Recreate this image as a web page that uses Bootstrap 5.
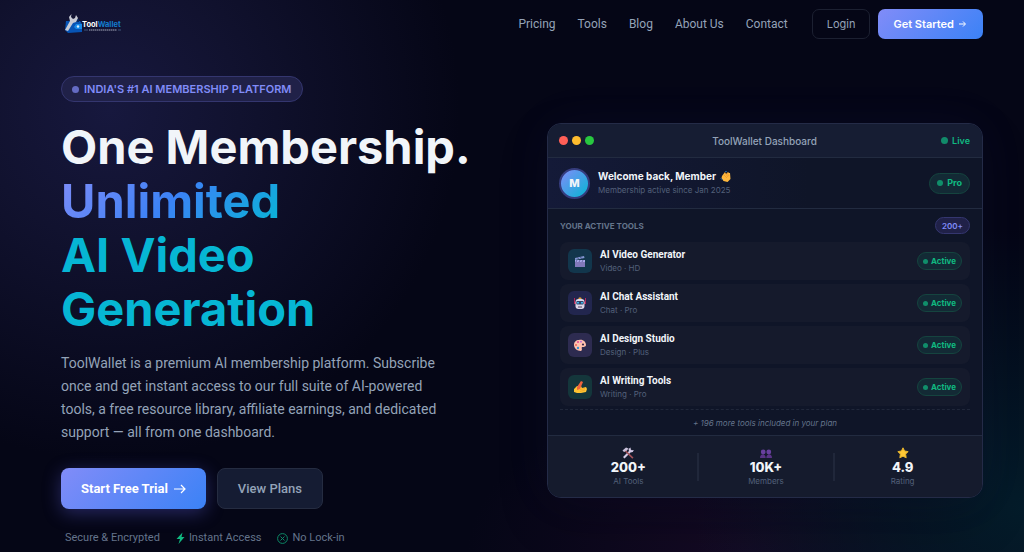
<!DOCTYPE html>
<html lang="en">
<head>
<meta charset="utf-8">
<meta name="viewport" content="width=device-width, initial-scale=1">
<title>ToolWallet</title>
<link href="https://cdn.jsdelivr.net/npm/bootstrap@5.3.0/dist/css/bootstrap.min.css" rel="stylesheet">
<style>
:root{--violet:#818cf8;--blue:#3b82f6;--cyan:#06b6d4;--green:#10b981;--muted:#94a3b8;--dim:#53607a;--line:#222b40}
body{font-family:Inter,"Open Sans",sans-serif;font-size:12px;line-height:16px;color:#f1f5f9;background:#050616;min-height:100vh;
 background-image:radial-gradient(circle at 110px 110px,#17183e 0,#11122f 130px,rgba(5,6,22,0) 350px),radial-gradient(ellipse 330px 280px at 100% 92%,#041c2a,rgba(4,28,42,0)),radial-gradient(ellipse 280px 160px at 73% 100%,#150a24,rgba(21,10,36,0))}
.page-pad{padding-left:61px;padding-right:41px}
.top-nav{height:48px;padding-top:0;padding-bottom:0}
.nav-links{gap:22px}
.top-nav .nav-links .nav-link{color:var(--muted);padding:0;font:400 12px/16px Roboto,Inter,sans-serif}
.grad{background:linear-gradient(135deg,var(--violet),var(--blue));color:#fff;border:0}
.btn-top{font-size:11px;line-height:16px;height:30px;border-radius:7px;padding:0 14px}
.btn-start{padding:0 15px}
.btn-ghost{color:var(--muted);border:1px solid #1c2031}
.hero-row{--bs-gutter-x:50px}
.hero{padding-top:28px}
.pill{display:inline-flex;align-items:center;border-radius:50px;border:1px solid;white-space:nowrap;font-weight:600}
.pill-violet{background:#202148;border-color:#34366f;color:var(--violet)}
.pill-green{background:#132a35;border-color:#15443f;color:var(--green);font-weight:700}
.hero-pill{font-size:11px;height:26px;padding:0 10px;gap:5px}
.dot{width:7px;height:7px;border-radius:50%;background:currentColor;opacity:.7;flex:none}
.dot-s{width:5px;height:5px}
.dot-m{width:6px;height:6px}
h1{font-size:47px;line-height:54px;font-weight:700;color:#f1f5f9;margin:18px 0 0}
.t-grad{background:linear-gradient(135deg,var(--violet),var(--blue) 50%,var(--cyan));-webkit-background-clip:text;background-clip:text;color:transparent}
.t-cyan{color:var(--cyan)}
.intro{font-family:Roboto,Inter,sans-serif;font-size:14px;line-height:23px;color:var(--muted);margin:16px 0 24px}
.actions{gap:11px}
.btn-hero{font-family:Roboto,Inter,sans-serif;font-size:13px;line-height:18px;height:41px;border-radius:8px;padding:0 20px}
.btn-main{font-weight:700;box-shadow:0 4px 18px rgba(99,102,241,.35)}
.btn-plans{background:#151c33;color:var(--muted);border:1px solid #252c41;font-weight:500}
.trust{font-family:Roboto,Inter,sans-serif;font-size:11px;line-height:14px;color:#64748b;margin-top:22px}
.dash{background:#0f1528;border:1px solid #242b47;border-radius:14px;box-shadow:0 20px 50px rgba(0,0,0,.2),0 0 50px rgba(99,102,241,.06)}
.dash-head{height:34px;background:#161d33;border-bottom:1px solid var(--line)}
.dash-head>div{flex:1 1 0}
.dash-title{font-size:10px;font-weight:500;color:var(--muted)}
.light{width:9px;height:9px;border-radius:50%}
.light-red{background:#ff5f57}.light-yellow{background:#febc2e}.light-green{background:#28c840}
.dash-user{height:51px;background:linear-gradient(90deg,#141a38,#0f1528 60%);border-bottom:1px solid var(--line)}
.avatar{width:31px;height:31px;border-radius:50%;background:linear-gradient(135deg,var(--violet),var(--cyan));border:2px solid #353c7d;font-size:11px;font-weight:800}
.pad-x{padding-left:12px;padding-right:12px}
.dash-head,.dash-user{padding-left:11px}
.name{font-size:10px;line-height:15px;font-weight:700}
.tool .name{font-family:Roboto,Inter,sans-serif}
.note{font-size:8px;line-height:13px;color:var(--dim)}
.live{font-size:9px;color:var(--green);font-weight:600}
.label{font-size:8px;font-weight:700;color:#64748b}
.pro{font-size:9px;height:21px;padding:0 7px}
.tools-head{height:33px}
.count{font-size:8px;height:17px;padding:0 6px}
.active-pill{font-size:8px;height:18px;padding:0 5px;gap:3px}
.tool{height:38px;background:#151a2c;border-radius:8px;padding:0 8px}
.tile{width:24px;height:24px;border-radius:6px}
.tile-video{background:#12364c}.tile-chat{background:#22264e}.tile-design{background:#2d2b50}.tile-write{background:#14363b}
.more{border-top:1px dashed #20273a;font-size:8px;color:#64748b;height:26px;margin-top:3px}
.stats{height:62px;background:#151b2d;border-top:1px solid var(--line)}
.stats .num{font-size:13px;line-height:17px;font-weight:800}
.stats .note{line-height:11px}
.stat{height:28px}
.stat+.stat{border-left:2px solid #20273a}
svg{display:block;flex:none}
</style>
</head>
<body>
<nav class="navbar navbar-expand top-nav page-pad" aria-label="Main">
 <a class="navbar-brand p-0 m-0 ps-1" href="#" aria-label="ToolWallet">
  <svg width="58" height="20" viewBox="0 0 58 20">
   <path d="M1 7h14l2 3v8L3 19l-3-3z" fill="#0754b5"/><path d="M2 7l12-2v3z" fill="#08275c"/><path d="M11 10h6v5h-6l-2-2z" fill="#178ae8"/><circle cx="13" cy="12.500" r="1.200" fill="#d9efff"/>
   <path d="M6.500 0L6 3l2 2 2-1 1-3 2 3-2 4-3 1-5 8-3-1 5-9-1-4z" fill="#c7cad4"/>
   <text x="17" y="13" font-family="Inter,sans-serif" font-size="7.500" font-weight="700" fill="#fff">Tool<tspan fill="#147dce">Wallet</tspan></text>
   <path d="M19 16h4m30 0h3" stroke="#53709a" stroke-width=".7"/><path d="M24 16h28" stroke="#a3a8bb" stroke-dasharray="1.500 .5"/>
  </svg>
 </a>
 <div class="d-flex ms-auto align-items-center">
  <div class="navbar-nav nav-links me-4"><a class="nav-link" href="#">Pricing</a><a class="nav-link" href="#">Tools</a><a class="nav-link" href="#">Blog</a><a class="nav-link" href="#">About Us</a><a class="nav-link" href="#">Contact</a></div>
  <button type="button" class="btn btn-top btn-ghost me-2">Login</button>
  <button type="button" class="btn btn-top btn-start grad fw-semibold d-flex align-items-center gap-1">Get Started
   <svg width="10" height="8" viewBox="0 0 10 8" fill="none" stroke="#fff"><path d="M1 4h6M5 1.500L7.500 4 5 6.500"/></svg></button>
 </div>
</nav>
<main class="hero page-pad">
 <div class="row hero-row align-items-center">
  <section class="col-6">
   <div class="pill pill-violet hero-pill"><span class="dot"></span>INDIA'S #1 AI MEMBERSHIP PLATFORM</div>
   <h1><span class="text-nowrap">One Membership.</span><br><span class="t-grad">Unlimited</span><br><span class="t-cyan">AI Video<br>Generation</span></h1>
   <p class="intro">ToolWallet is a premium AI membership platform. Subscribe<br>once and get instant access to our full suite of AI-powered<br>tools, a free resource library, affiliate earnings, and dedicated<br>support — all from one dashboard.</p>
   <div class="d-flex actions">
    <button type="button" class="btn btn-hero grad btn-main d-flex align-items-center gap-1">Start Free Trial
     <svg width="14" height="12" viewBox="0 0 14 12" fill="none" stroke="#fff" stroke-width="1.200"><path d="M2 6h11M9 2l4 4-4 4"/></svg></button>
    <button type="button" class="btn btn-hero btn-plans">View Plans</button>
   </div>
   <div class="trust d-flex gap-3 ps-1">
    <span>Secure &amp; Encrypted</span>
    <span class="d-flex align-items-center gap-1"><svg width="9" height="12" viewBox="0 0 9 12"><path d="M6.500 .5L.5 7H4l-1.500 5L8.500 5H5.500z" fill="#10b981"/></svg>Instant Access</span>
    <span class="d-flex align-items-center gap-1"><svg width="11" height="11" viewBox="0 0 11 11" fill="none" stroke="#0d8a67"><circle cx="5.500" cy="5.500" r="4.900"/><path d="M3.500 3.500l4 4m0-4l-4 4"/></svg>No Lock-in</span>
   </div>
  </section>
  <section class="col-6">
   <div class="dash overflow-hidden">
    <div class="dash-head d-flex align-items-center pad-x">
     <div class="d-flex gap-1"><span class="light light-red"></span><span class="light light-yellow"></span><span class="light light-green"></span></div>
     <div class="dash-title text-center text-nowrap">ToolWallet Dashboard</div>
     <div class="live d-flex align-items-center justify-content-end gap-1"><span class="dot"></span>Live</div>
    </div>
    <div class="dash-user d-flex align-items-center pad-x">
     <div class="avatar d-flex align-items-center justify-content-center me-2">M</div>
     <div><div class="name d-flex align-items-center gap-1">Welcome back, Member
      <svg width="11" height="11" viewBox="0 0 11 11"><path d="M2 5l3-4 1 2 2-2 1 1 1 0 .5 6-3 3-4-1-2-3z" fill="#ffb83d"/><path d="M4 4l3 3M5 2l3 4M7 2l2 3" stroke="#e78923" stroke-width=".5"/><path d="M.5 7l2 2M5 .5l2-.2" stroke="#2878b9" stroke-width=".8"/></svg></div>
      <div class="note">Membership active since Jan 2025</div></div>
     <div class="pill pill-green ms-auto gap-1 pro"><span class="dot dot-m"></span>Pro</div>
    </div>
    <div class="pad-x">
     <div class="d-flex align-items-center justify-content-between tools-head"><span class="label">YOUR ACTIVE TOOLS</span><span class="pill pill-violet count">200+</span></div>
     <div class="d-grid gap-1">
      <div class="tool d-flex align-items-center gap-2"><div class="tile tile-video d-flex align-items-center justify-content-center"><svg width="12" height="12" viewBox="0 0 12 12"><path d="M1 5h10v7H1z" fill="#8279bb"/><path d="M1 5h10v2H1z" fill="#aba9ed"/><path d="M1 3l9-2 .5 2L1 5z" fill="#8195d0"/><path d="M3 2.500l2 1.500m1-2 2 1.500M3 5l-1 2m4-2L5 7m4-2L8 7" stroke="#35376b" stroke-width=".6"/></svg></div><div><div class="name">AI Video Generator</div><div class="note">Video · HD</div></div><div class="pill pill-green active-pill ms-auto"><span class="dot dot-s"></span>Active</div></div>
      <div class="tool d-flex align-items-center gap-2"><div class="tile tile-chat d-flex align-items-center justify-content-center"><svg width="12" height="12" viewBox="0 0 12 12"><path d="M0 1h1v6H0zm11 0h1v6h-1z" fill="#b52859"/><path d="M1 5h10v2H1z" fill="#b52859"/><circle cx="6" cy="2" r="1.700" fill="#d69c36"/><rect x="1.500" y="2" width="9" height="10" rx="3" fill="#ddd6e9"/><rect x="2.300" y="4" width="7.400" height="3.500" rx="1" fill="#344469"/><path d="M3 5h2v1.500H3zm4 0h2v1.500H7z" fill="#39b5eb"/><path d="M4 9.500h4v1H4z" fill="#554461"/></svg></div><div><div class="name">AI Chat Assistant</div><div class="note">Chat · Pro</div></div><div class="pill pill-green active-pill ms-auto"><span class="dot dot-s"></span>Active</div></div>
      <div class="tool d-flex align-items-center gap-2"><div class="tile tile-design d-flex align-items-center justify-content-center"><svg width="12" height="12" viewBox="0 0 12 12"><path d="M5 1c4-1 7 2 7 5 0 2-3 2-4 2-1 1 1 3-1 4C3 12 0 9 0 6c0-3 2-5 5-5z" fill="#ffc1ae"/><circle cx="9" cy="5.500" r="1.100" fill="#3c294e"/><circle cx="4" cy="3" r="1" fill="#e44491"/><circle cx="7" cy="2.700" r=".9" fill="#b560dc"/><circle cx="2" cy="6" r="1" fill="#ed6352"/><circle cx="4" cy="9" r="1.200" fill="#3892d0"/></svg></div><div><div class="name">AI Design Studio</div><div class="note">Design · Plus</div></div><div class="pill pill-green active-pill ms-auto"><span class="dot dot-s"></span>Active</div></div>
      <div class="tool d-flex align-items-center gap-2"><div class="tile tile-write d-flex align-items-center justify-content-center"><svg width="13" height="12" viewBox="0 0 13 12"><path d="M0 8l3-3 4 0 1 2 4-1 1 2-1 3-5 1H3l-3-1z" fill="#ffc331"/><path d="M7 0l2 1-3 7-3 1 0-3z" fill="#ef643d"/><path d="M6 8.500l5-1M6 10.500l5-1.500" stroke="#e39220" stroke-width=".5"/></svg></div><div><div class="name">AI Writing Tools</div><div class="note">Writing · Pro</div></div><div class="pill pill-green active-pill ms-auto"><span class="dot dot-s"></span>Active</div></div>
     </div>
     <div class="more fst-italic d-flex align-items-center justify-content-center">+ 196 more tools included in your plan</div>
    </div>
    <div class="stats pad-x d-flex align-items-center">
     <div class="stat col-4 d-flex flex-column align-items-center justify-content-center"><svg width="12" height="12" viewBox="0 0 12 12"><path d="M1 10l6-6-.5-2L8.500.5l.3 2 1 .7 2-.2-1 2-2.300.5-6 6z" fill="#d4cbe7"/><path d="M.5 3.500L4 .5l2.500 1L4.500 4 2 5z" fill="#c9c1db"/><path d="M4 3.500l7.500 7-1.200 1.200L3 4.500z" fill="#a3525a"/></svg><div class="num">200+</div><div class="note">AI Tools</div></div>
     <div class="stat col-4 d-flex flex-column align-items-center justify-content-center"><svg width="12" height="12" viewBox="0 0 12 12"><circle cx="3.200" cy="5" r="2.400" fill="#69409f"/><circle cx="8.800" cy="5" r="2.400" fill="#69409f"/><path d="M0 11c0-5 5.700-5 5.700 0m.6 0c0-5 5.700-5 5.700 0z" fill="#593386"/></svg><div class="num">10K+</div><div class="note">Members</div></div>
     <div class="stat col-4 d-flex flex-column align-items-center justify-content-center"><svg width="12" height="12" viewBox="0 0 12 12"><path d="M6 .8l1.600 3.200 3.600.6-2.600 2.500.6 3.700L6 9.200l-3.200 1.600.6-3.700L.8 4.600 4.400 4z" fill="#ffc936" stroke="#e6b32b" stroke-linejoin="round"/></svg><div class="num">4.9</div><div class="note">Rating</div></div>
    </div>
   </div>
  </section>
 </div>
</main>
<script src="https://cdn.jsdelivr.net/npm/bootstrap@5.3.0/dist/js/bootstrap.bundle.min.js"></script>
</body>
</html>
